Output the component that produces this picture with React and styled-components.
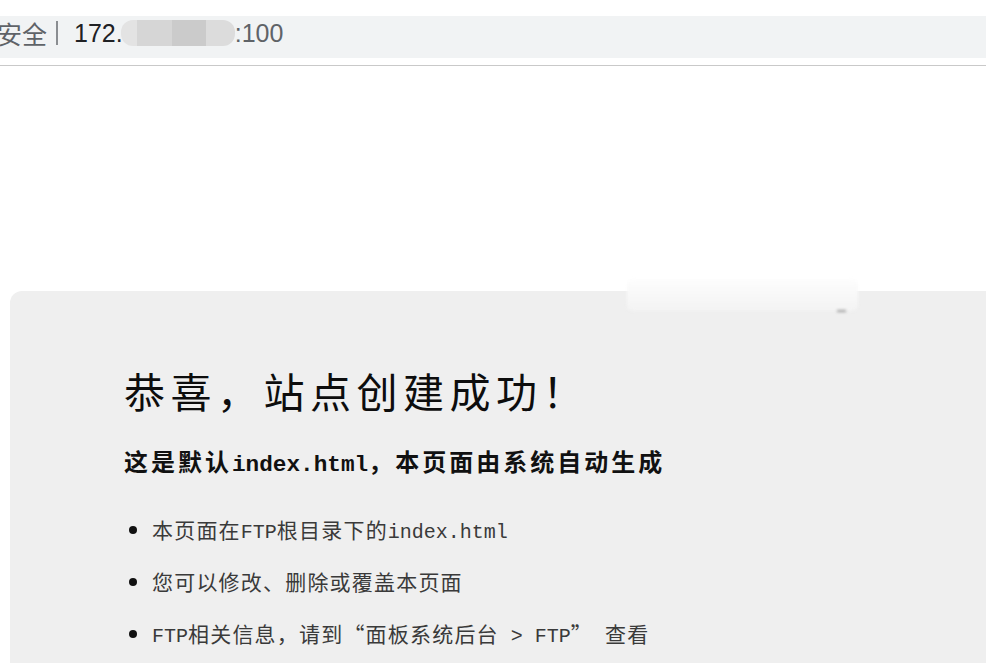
import styled, { createGlobalStyle } from "styled-components";

const GlobalStyle = createGlobalStyle`
    html, body {
        margin: 0;
        padding: 0;
        background: #ffffff;
        overflow: hidden;
    }
`;

const App = () => {
    return (
        <>
            <GlobalStyle />
            <StyledPage>
                <StyledChrome>
                    <StyledAddressBar>
                        <StyledSecurity>安全</StyledSecurity>
                        <StyledDivider />
                        <StyledHost>172.</StyledHost>
                        <StyledMask>
                            <span />
                            <span />
                            <span />
                            <span />
                        </StyledMask>
                        <StyledPort>:100</StyledPort>
                    </StyledAddressBar>
                </StyledChrome>
                <StyledCard>
                    <StyledSmudge>
                        <span />
                    </StyledSmudge>
                    <StyledTitle>恭喜，站点创建成功！</StyledTitle>
                    <StyledSubtitle>
                        这是默认<StyledMono $size={22.7}>index.html</StyledMono>，本页面由系统自动生成
                    </StyledSubtitle>
                    <StyledList>
                        <li>
                            本页面在<StyledMono>FTP</StyledMono>根目录下的<StyledMono>index.html</StyledMono>
                        </li>
                        <li>您可以修改、删除或覆盖本页面</li>
                        <li>
                            <StyledMono>FTP</StyledMono>相关信息，请到“面板系统后台<StyledMono> &gt; FTP</StyledMono>”<StyledMono> </StyledMono>查看
                        </li>
                    </StyledList>
                </StyledCard>
            </StyledPage>
        </>
    );
};

const StyledPage = styled.div`
    width: 986px;
    height: 663px;
    overflow: hidden;
    display: flex;
    flex-direction: column;
`;

const StyledChrome = styled.div`
    padding-top: 16px;
    padding-bottom: 7px;
    border-bottom: 1px solid #c9c9c9;
`;

const StyledAddressBar = styled.div`
    height: 34px;
    padding-bottom: 8px;
    background: #f1f3f4;
    display: flex;
    align-items: center;
    font-family: "Liberation Sans", "Noto Sans CJK SC", sans-serif;
    font-size: 25px;
    margin-left: -3px;
`;

const StyledSecurity = styled.span`
    color: #5f6368;
`;

const StyledDivider = styled.span`
    width: 2px;
    height: 24px;
    background: #8a8d91;
    margin: 0 16px 0 9px;
`;

const StyledHost = styled.span`
    color: #202124;
`;

const StyledMask = styled.span`
    display: flex;
    height: 26px;
    margin-left: -2px;
    border-radius: 12px;
    overflow: hidden;
    filter: blur(0.6px);
    span {
        display: block;
        height: 100%;
    }
    span:nth-child(1) { width: 16px; background: #e3e3e3; }
    span:nth-child(2) { width: 35px; background: #d6d6d6; }
    span:nth-child(3) { width: 34px; background: #cbcbcb; }
    span:nth-child(4) { width: 29px; background: #dcdcdc; }
`;

const StyledPort = styled.span`
    color: #5f6368;
`;

const StyledCard = styled.div`
    position: relative;
    margin: 225px 0 0 10px;
    flex: 1;
    background: #efefef;
    border-radius: 12px 0 0 0;
    padding: 75px 0 0 114px;
    font-family: "Noto Sans CJK SC", sans-serif;
    color: #111;
`;

const StyledSmudge = styled.div`
    position: absolute;
    left: 617px;
    top: -12px;
    width: 231px;
    height: 32px;
    background: linear-gradient(#fdfdfd, #f3f3f3);
    border-radius: 6px;
    filter: blur(1.5px);
    span {
        position: absolute;
        right: 12px;
        bottom: -1px;
        width: 9px;
        height: 2px;
        background: #9a9a9a;
    }
`;

const StyledTitle = styled.h1`
    margin: 0;
    font-size: 41px;
    line-height: 48px;
    font-weight: normal;
    letter-spacing: 5.5px;
    color: #0d0d0d;
`;

const StyledSubtitle = styled.h2`
    margin: 31px 0 0 0;
    font-size: 24px;
    line-height: 32px;
    font-weight: bold;
    letter-spacing: 3px;
    color: #111;
`;

const StyledMono = styled.span`
    font-family: "Liberation Mono", monospace;
    font-size: ${(p) => p.$size || 20}px;
    line-height: 1;
    letter-spacing: 0;
    white-space: pre;
`;

const StyledList = styled.ul`
    margin: 37px 0 0 0;
    padding-left: 28px;
    li {
        font-size: 21px;
        line-height: 30px;
        letter-spacing: 1.2px;
        color: #3a3a3a;
        margin-bottom: 22px;
    }
    li::marker {
        color: #111;
    }
`;

export default App;
